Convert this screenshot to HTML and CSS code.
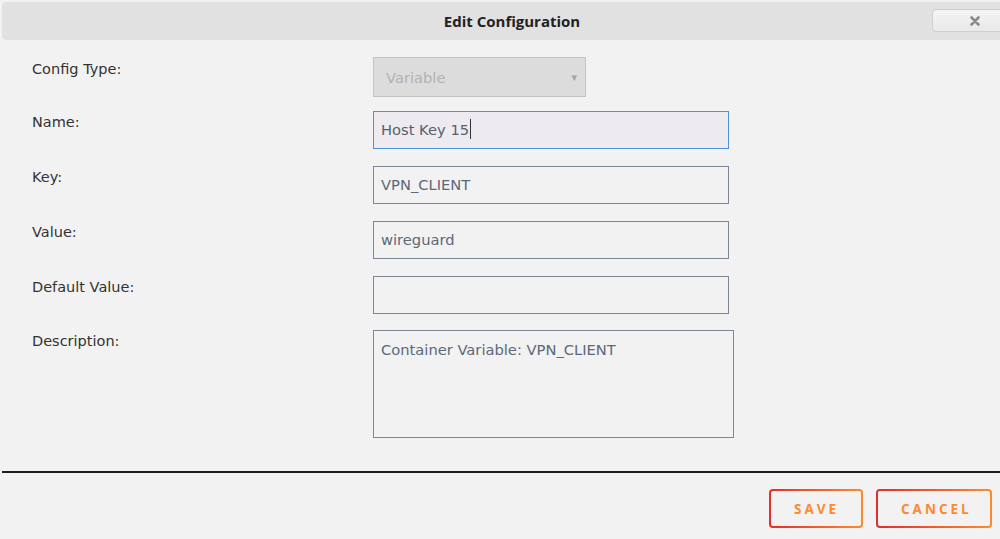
FILE: index.html
```html
<!DOCTYPE html>
<html lang="en">
<head>
  <meta charset="UTF-8" />
  <meta name="viewport" content="width=device-width, initial-scale=1.0" />
  <title>Edit Configuration</title>
  <link rel="stylesheet" href="styles.css">
</head>
<body>
  <div class="dialog">
    <div class="titlebar">
      <span class="title">Edit Configuration</span>
      <button class="close-btn" title="Close">
        <svg width="10" height="10" viewBox="0 0 10 10">
          <path d="M1.5 1.5 L8.5 8.5 M8.5 1.5 L1.5 8.5" stroke="#8a8a8a" stroke-width="2.6" stroke-linecap="round" />
        </svg>
      </button>
    </div>

    <div class="form">
      <div class="row row-type">
        <label>Config Type:</label>
        <div class="select disabled">
          <span>Variable</span>
          <span class="caret">&#9662;</span>
        </div>
      </div>
      <div class="row">
        <label>Name:</label>
        <div class="field focused">Host Key 15<span class="cursor"></span></div>
      </div>
      <div class="row">
        <label>Key:</label>
        <div class="field">VPN_CLIENT</div>
      </div>
      <div class="row">
        <label>Value:</label>
        <div class="field">wireguard</div>
      </div>
      <div class="row row-default">
        <label>Default Value:</label>
        <div class="field"></div>
      </div>
      <div class="row row-desc">
        <label>Description:</label>
        <div class="field area">Container Variable: VPN_CLIENT</div>
      </div>
    </div>

    <div class="footer">
      <button class="btn">SAVE</button>
      <button class="btn">CANCEL</button>
    </div>
  </div>
</body>
</html>
```

FILE: styles.css
```css
html, body {
  margin: 0;
  padding: 0;
  background: #f2f2f2;
}
body {
  font-family: "DejaVu Sans", sans-serif;
  color: #333;
}
.dialog {
  width: 1000px;
  height: 539px;
  padding: 2px 0 0 2px;
  box-sizing: border-box;
}
.titlebar {
  position: relative;
  height: 38px;
  background: #e1e1e1;
  border-radius: 4px 0 0 4px;
  display: flex;
  align-items: center;
  justify-content: center;
}
.title {
  font-family: "Open Sans", sans-serif;
  font-weight: 700;
  font-size: 15px;
  color: #222;
  margin-left: 22px;
}
.close-btn {
  position: absolute;
  right: -10px;
  top: 7px;
  width: 78px;
  height: 23px;
  border: 1px solid #cfcfcf;
  border-radius: 4px;
  background: linear-gradient(#f4f4f4, #e9e9e9);
  display: flex;
  align-items: center;
  padding-left: 37px;
  box-sizing: border-box;
}
.form {
  padding: 17px 0 0 30px;
}
.row {
  display: flex;
  margin-bottom: 17px;
}
.row:last-child { margin-bottom: 0; }
.row-type { margin-bottom: 14px; }
.row-default { margin-bottom: 16px; }
.row label {
  width: 341px;
  font-size: 14.5px;
  color: #333;
  padding-top: 3px;
}
.row-type label { padding-top: 4px; }
.select {
  width: 213px;
  height: 40px;
  box-sizing: border-box;
  border: 1px solid #c4c4c4;
  background: #dcdcdc;
  display: flex;
  align-items: center;
  justify-content: space-between;
  padding: 0 8px 0 12px;
  font-family: "DejaVu Sans", sans-serif;
  font-size: 14.7px;
  color: #b2b2b2;
}
.select .caret {
  font-size: 11px;
  color: #a0a4aa;
}
.field {
  width: 356px;
  height: 38px;
  box-sizing: border-box;
  border: 1px solid #7d8796;
  background: #f2f2f2;
  font-family: "DejaVu Sans", sans-serif;
  font-size: 14.7px;
  color: #5d6878;
  padding: 7px 7px 9px;
  display: flex;
  align-items: center;
}
.field.focused {
  border-color: #4d93d6;
  background: #edebf0;
  color: #55606e;
}
.cursor {
  display: inline-block;
  width: 1px;
  height: 20px;
  background: #333;
  margin-left: 1px;
}
.field.area {
  width: 361px;
  height: 108px;
  align-items: flex-start;
  padding-top: 10px;
}
.footer {
  margin-top: 33px;
  border-top: 2px solid #1e1e1e;
  display: flex;
  justify-content: flex-end;
  gap: 13px;
  padding: 16px 8px 0 0;
}
.btn {
  height: 39px;
  padding: 0 23px;
  border: 2px solid transparent;
  border-radius: 4px;
  background:
    linear-gradient(#f2f2f2, #f2f2f2) padding-box,
    linear-gradient(90deg, #e22d2d, #ff8a2a) border-box;
  font-family: "Open Sans", sans-serif;
  font-weight: 700;
  font-size: 13.5px;
  letter-spacing: 3px;
  color: #ff8a2e;
}
.btn:first-child { width: 94px; }
.btn:last-child { width: 116px; }
```
